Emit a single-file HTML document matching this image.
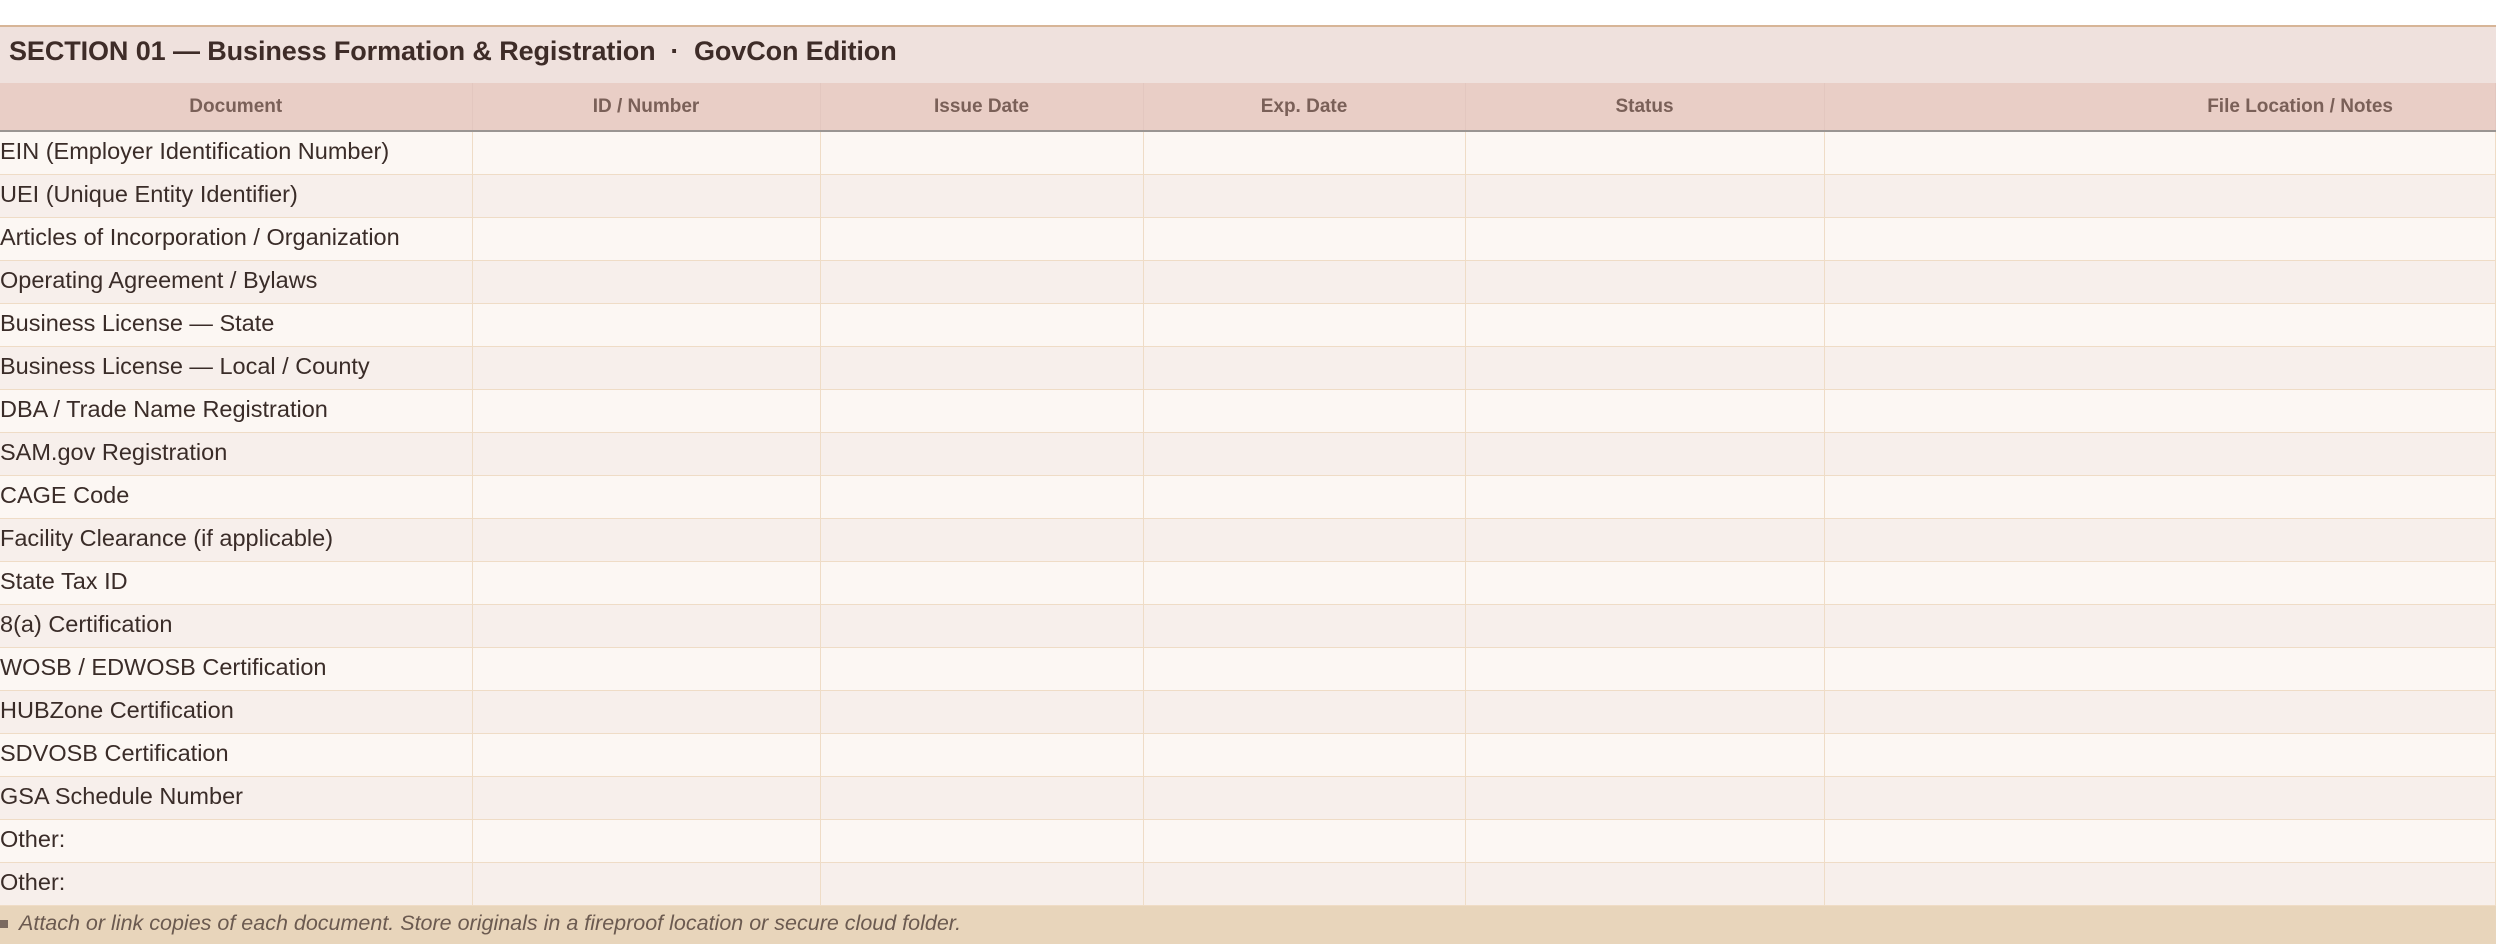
<!DOCTYPE html>
<html><head><meta charset="utf-8"><style>
body{margin:0;width:2500px;height:947px;background:#fff;overflow:hidden;font-family:"Liberation Sans",sans-serif;position:relative}
.top{position:absolute;left:0;top:25px;width:2496px;height:2px;background:#d7b597}
.title{position:absolute;left:0;top:27px;width:2496px;height:56px;background:#efe1dd;color:#3e2c28;font-weight:bold;font-size:27px;line-height:48px;padding-left:9px;box-sizing:border-box;letter-spacing:-0.1px}
table{position:absolute;left:0;top:83px;border-collapse:collapse;table-layout:fixed;width:2496px}
th{background:#e9cec6;color:#7a6058;font-size:19px;height:47px;border-bottom:2px solid #9a9592;border-right:1px solid #e3c7bf;padding:0}
td{height:38px;border-bottom:1px solid #efdcc6;border-right:1px solid #efdcc6;font-size:23.5px;color:#3a2c28;padding:0 0 4px 0;white-space:nowrap;overflow:hidden}
tr:nth-child(even) td{background:#fcf7f3}
tr:nth-child(odd) td{background:#f7efeb}
.foot{position:absolute;left:0;top:906px;width:2496px;height:38px;background:#e8d5bb;color:#6b5a50;font-style:italic;font-size:21.5px;line-height:34px}
.sq{display:inline-block;width:8px;height:8px;background:#7a6a60;margin:0 11px 0 0;vertical-align:middle}
</style></head><body>
<div class="top"></div>
<div class="title">SECTION 01 — Business Formation &amp; Registration &nbsp;·&nbsp; GovCon Edition</div>
<table>
<colgroup><col style="width:472px"><col style="width:348px"><col style="width:323px"><col style="width:322px"><col style="width:359px"><col></colgroup>
<tr><th>Document</th><th>ID / Number</th><th>Issue Date</th><th>Exp. Date</th><th>Status</th><th style="text-align:right;padding-right:102px">File Location / Notes</th></tr>
<tr><td>EIN (Employer Identification Number)</td><td></td><td></td><td></td><td></td><td></td></tr>
<tr><td>UEI (Unique Entity Identifier)</td><td></td><td></td><td></td><td></td><td></td></tr>
<tr><td>Articles of Incorporation / Organization</td><td></td><td></td><td></td><td></td><td></td></tr>
<tr><td>Operating Agreement / Bylaws</td><td></td><td></td><td></td><td></td><td></td></tr>
<tr><td>Business License — State</td><td></td><td></td><td></td><td></td><td></td></tr>
<tr><td>Business License — Local / County</td><td></td><td></td><td></td><td></td><td></td></tr>
<tr><td>DBA / Trade Name Registration</td><td></td><td></td><td></td><td></td><td></td></tr>
<tr><td>SAM.gov Registration</td><td></td><td></td><td></td><td></td><td></td></tr>
<tr><td>CAGE Code</td><td></td><td></td><td></td><td></td><td></td></tr>
<tr><td>Facility Clearance (if applicable)</td><td></td><td></td><td></td><td></td><td></td></tr>
<tr><td>State Tax ID</td><td></td><td></td><td></td><td></td><td></td></tr>
<tr><td>8(a) Certification</td><td></td><td></td><td></td><td></td><td></td></tr>
<tr><td>WOSB / EDWOSB Certification</td><td></td><td></td><td></td><td></td><td></td></tr>
<tr><td>HUBZone Certification</td><td></td><td></td><td></td><td></td><td></td></tr>
<tr><td>SDVOSB Certification</td><td></td><td></td><td></td><td></td><td></td></tr>
<tr><td>GSA Schedule Number</td><td></td><td></td><td></td><td></td><td></td></tr>
<tr><td>Other:</td><td></td><td></td><td></td><td></td><td></td></tr>
<tr><td>Other:</td><td></td><td></td><td></td><td></td><td></td></tr>
</table>
<div class="foot"><span class="sq"></span>Attach or link copies of each document. Store originals in a fireproof location or secure cloud folder.</div>
</body></html>
